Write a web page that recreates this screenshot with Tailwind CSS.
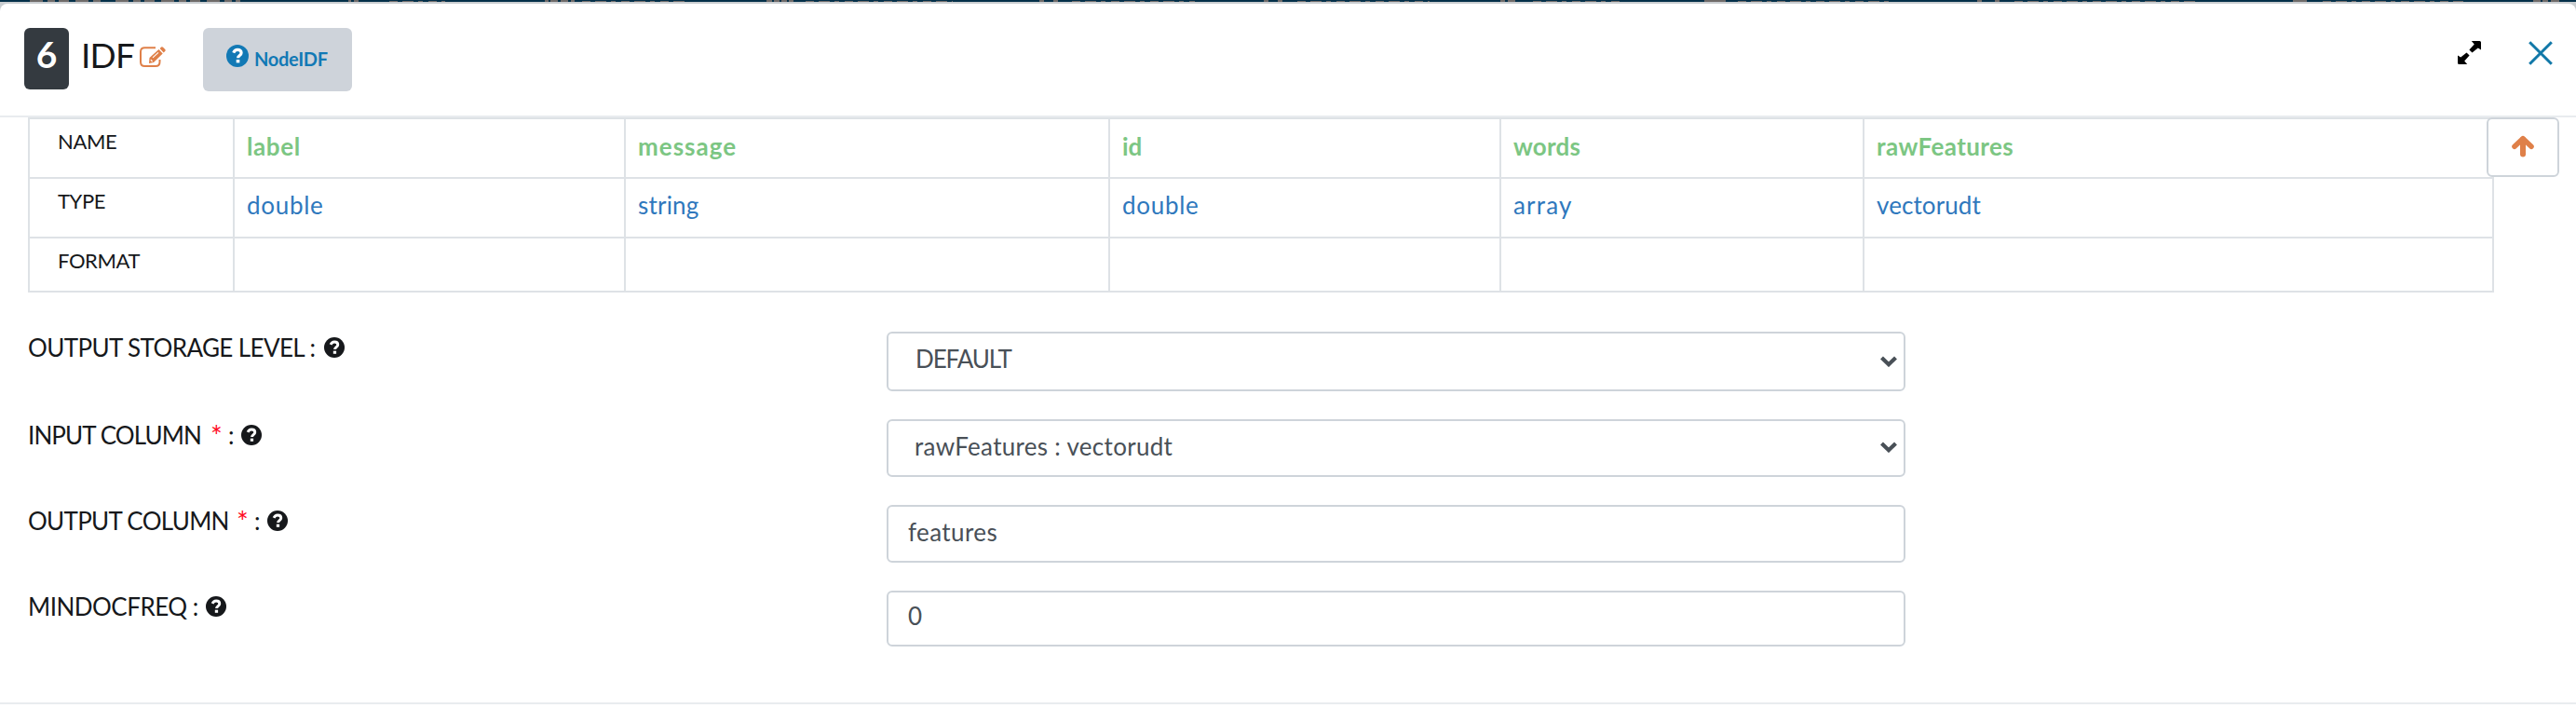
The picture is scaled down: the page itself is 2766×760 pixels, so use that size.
<!DOCTYPE html>
<html lang="en">
<head>
<meta charset="utf-8">
<title>IDF</title>
<script src="https://cdn.jsdelivr.net/npm/@tailwindcss/browser@4"></script>
</head>
<body class="h-[760px] overflow-hidden bg-[#c9cdd0] font-['Lato',sans-serif] text-[#16181b]">
<svg width="0" height="0" class="absolute">
  <symbol id="help" viewBox="0 0 24 24"><circle cx="12" cy="12" r="12" fill="currentColor"/><path d="M7.700 8.600C8.600 6.600 10 5.400 12.100 5.400c2.400 0 4 1.400 4 3.300 0 2.900-3.500 2.700-3.500 5.500" fill="none" stroke="#fff" stroke-width="3.200"/><rect x="10.700" y="16" width="3.600" height="3.400" fill="#fff"/></symbol>
  <symbol id="chev" viewBox="0 0 18 12"><path d="M1.500 2L9 9.200 16.500 2" fill="none" stroke="#495057" stroke-width="4.200"/></symbol>
</svg>

<!-- Dimmed navigation bar behind the dialog -->
<div class="h-[2px] bg-[#04304a]">
  <svg class="block" width="2766" height="2" fill="none" stroke="#6f6b69" stroke-width="2">
    <path stroke-dasharray="14 5 8 4 11 7" d="M32 1H110M124 1H258"/>
    <path d="M374 1h3m3 0h5M585 1h4m2 0h8m3 0h8m3 0h4M823 1h6m2 0h6m2 0h6m2 0h5M1116 1h5m10 0h5M1357 1h5m10 0h5M1611 1h5m3 0h8M1830 1h23M2123 1h5m14 0h5M2462 1h15M2720 1h8m2 0h6m3 0h9"/>
    <path stroke-dasharray="9 5 12 5 5 6" d="M418 2H478M625 2H735M865 2H1023M1151 2H1283M1393 2H1535M1646 2H1741M1866 2H2031M2163 2H2357M2494 2H2645"/>
  </svg>
</div>

<div class="mt-[2px] h-[756px] rounded-t-[8px] bg-white">
  <header class="flex h-[122px] items-start border-b-2 border-[#e9ecef] pl-[26px] pr-[25px] pt-[26px]">
    <div class="h-[66px] w-[48px] rounded-[6px] bg-[#343a40] pt-[5px] text-center text-[39px] font-bold leading-[46px] text-white">6</div>
    <h1 class="ml-[13px] w-[63px] pt-[4px] text-[37px] leading-[50px] tracking-[-0.8px]">IDF</h1>
    <svg class="mt-[20px]" width="28" height="23" viewBox="0 0 28 23" fill="none">
      <path d="M17 1.200H5.500Q1 1.200 1 5.500V16.500Q1 21 5.500 21H17Q21.500 21 21.500 16.500V14" stroke="#df8049" stroke-width="2"/>
      <path d="M10.500 12L20.500 3l4.200 4.400L15 17l-5 1z" fill="#df8049"/>
      <path d="M21.600 2l1.500-1.400q1-.8 2 .2l2.200 2.300q.8 1-.1 1.900L25.700 6.400z" fill="#df8049"/>
      <path d="M14 11.800l6-5.500M11.800 14.200l1.800 1.800" stroke="#fff" stroke-width="1.100"/>
    </svg>
    <button class="ml-[40px] flex h-[68px] w-[160px] items-start rounded-[6px] bg-[#ced3da] pl-[25px] pt-[18px] text-[#1279b5]">
      <svg class="text-[#1279b5]" width="24" height="24"><use href="#help"/></svg>
      <span class="ml-[6px] mt-[3px] text-[20px] font-bold leading-[24px] tracking-[-0.3px]">NodeIDF</span>
    </button>
    <div class="ml-auto mt-[14px] flex gap-[51px]">
      <svg width="25" height="25" viewBox="0 0 25 25" fill="#000"><path d="M14.800 0H23.500Q25 0 25 1.500V9.500L21.800 7.500 15.500 12.600 12.400 9.500 17.800 3.500zM10.200 25H1.500Q0 25 0 23.500V15.500L3.200 17.500 9.500 12.400 12.600 15.500 7.200 21.500z"/></svg>
      <svg width="26" height="26" viewBox="0 0 26 26" fill="none" stroke="#1178a8" stroke-width="3"><path d="M1.200 1.200L24.800 24.800M24.800 1.200L1.200 24.800"/></svg>
    </div>
  </header>

  <div class="flex h-[188px] items-start pl-[30px]">
    <table class="w-[2648px] table-fixed border-collapse text-[26px] leading-[30px] [&_td]:border-2 [&_td]:border-[#dee2e6] [&_td]:p-0 [&_td]:pl-[13px] [&_td]:align-top">
      <colgroup><col class="w-[220px]"><col class="w-[420px]"><col class="w-[520px]"><col class="w-[420px]"><col class="w-[390px]"><col></colgroup>
      <tr class="h-[64px] font-bold text-[#7cc683]">
        <td><div class="pl-[17px] pt-[9px] text-[22px] font-normal tracking-[-0.4px] text-[#16181b]">NAME</div></td>
        <td><div class="pt-[14px] tracking-[0.6px]">label</div></td>
        <td><div class="pt-[14px] tracking-[1px]">message</div></td>
        <td><div class="pt-[14px]">id</div></td>
        <td><div class="pt-[14px] tracking-[0.2px]">words</div></td>
        <td><div class="pt-[14px] tracking-[0.4px]">rawFeatures</div></td>
      </tr>
      <tr class="h-[64px] text-[#2f78bd]">
        <td><div class="pl-[17px] pt-[9px] text-[22px] tracking-[-0.4px] text-[#16181b]">TYPE</div></td>
        <td><div class="pt-[13px] tracking-[0.7px]">double</div></td>
        <td><div class="pt-[13px] tracking-[0.2px]">string</div></td>
        <td><div class="pt-[13px] tracking-[0.7px]">double</div></td>
        <td><div class="pt-[13px] tracking-[1.2px]">array</div></td>
        <td><div class="pt-[13px] tracking-[0.1px]">vectorudt</div></td>
      </tr>
      <tr class="h-[58px]">
        <td><div class="pl-[17px] pt-[9px] text-[22px] tracking-[-0.4px]">FORMAT</div></td>
        <td></td><td></td><td></td><td></td><td></td>
      </tr>
    </table>
    <button class="relative ml-[-8px] flex h-[64px] w-[78px] shrink-0 justify-center rounded-[6px] border-2 border-[#ced4da] bg-white pt-[17px]">
      <svg width="24" height="24" viewBox="0 0 24 24" fill="none" stroke="#df8049" stroke-linecap="round" stroke-width="6"><path d="M12 4.500V20.500"/><path d="M3 12.300L12 3.700 21 12.300" stroke-width="5.600" stroke-linejoin="round"/></svg>
    </button>
  </div>

  <form class="mt-[42px] grid h-[398px] content-start grid-cols-[922px_1094px] grid-rows-[94px_92px_92px_60px] items-start pl-[30px] text-[26px] leading-[30px]">
    <label class="flex pt-[2px]"><span class="w-[318px] whitespace-nowrap tracking-[-0.6px]">OUTPUT STORAGE LEVEL :</span><svg class="mt-[4px]" width="22" height="22"><use href="#help"/></svg></label>
    <div class="flex h-[64px] justify-between rounded-[6px] border-2 border-[#ced4da] pl-[29px] pr-[7px] pt-[12px] text-[#495057]"><span class="tracking-[-1.1px]">DEFAULT</span><svg class="mt-[12px]" width="18" height="12"><use href="#chev"/></svg></div>

    <label class="flex pt-[2px]"><span class="w-[196px] whitespace-nowrap tracking-[-0.9px]">INPUT COLUMN</span><span class="w-[19px] text-[30px] text-[#ff0a1e]">*</span><span class="w-[14px]">:</span><svg class="mt-[4px]" width="22" height="22"><use href="#help"/></svg></label>
    <div class="flex h-[62px] justify-between rounded-[6px] border-2 border-[#ced4da] pl-[28px] pr-[7px] pt-[12px] text-[#495057]"><span class="tracking-[0.3px]">rawFeatures : vectorudt</span><svg class="mt-[10px]" width="18" height="12"><use href="#chev"/></svg></div>

    <label class="flex pt-[2px]"><span class="w-[224px] whitespace-nowrap tracking-[-0.7px]">OUTPUT COLUMN</span><span class="w-[19px] text-[30px] text-[#ff0a1e]">*</span><span class="w-[14px]">:</span><svg class="mt-[4px]" width="22" height="22"><use href="#help"/></svg></label>
    <div class="h-[62px] rounded-[6px] border-2 border-[#ced4da] pl-[21px] pt-[12px] tracking-[0.4px] text-[#495057]">features</div>

    <label class="flex pt-[2px]"><span class="w-[191px] whitespace-nowrap tracking-[-0.5px]">MINDOCFREQ :</span><svg class="mt-[4px]" width="22" height="22"><use href="#help"/></svg></label>
    <div class="h-[60px] rounded-[6px] border-2 border-[#ced4da] pl-[21px] pt-[10px] text-[#495057]">0</div>
  </form>
  <div class="h-[2px] bg-[#e9ecef]"></div>
</div>
</body>
</html>
